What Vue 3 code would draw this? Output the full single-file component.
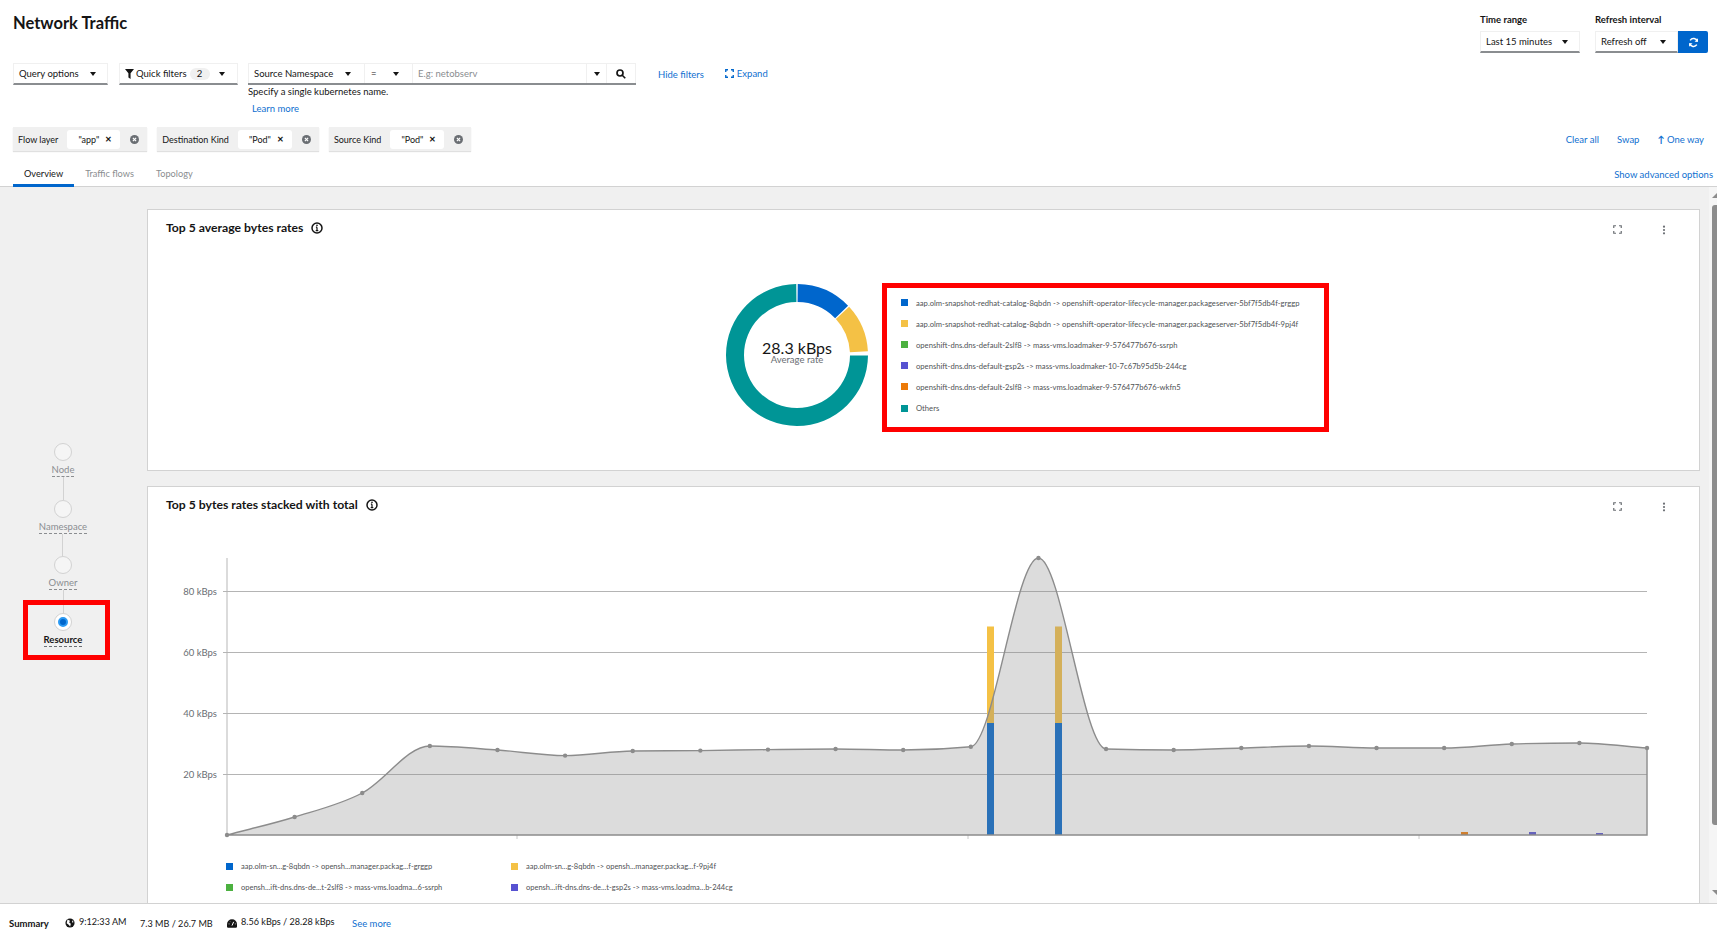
<template>
  <div class="page">
    <header class="head">
      <div class="top-row">
        <h1 class="title">Network Traffic</h1>
        <div class="time-controls">
          <div class="field range-field">
            <label>Time range</label>
            <div class="select range-select">Last 15 minutes<i class="caret"></i></div>
          </div>
          <div class="field">
            <label>Refresh interval</label>
            <div class="refresh-wrap">
              <div class="select refresh-select">Refresh off<i class="caret"></i></div>
              <button class="sync-btn">
                <svg width="11" height="11" viewBox="0 0 16 16" fill="none" stroke="#fff" stroke-width="2.2">
                  <path d="M13.5 6.5A5.7 5.7 0 0 0 3.2 4.8" />
                  <path d="M2.5 9.5a5.7 5.7 0 0 0 10.3 1.7" />
                  <path d="M14.5 1.8v5h-5z" fill="#fff" stroke="none" />
                  <path d="M1.5 14.2v-5h5z" fill="#fff" stroke="none" />
                </svg>
              </button>
            </div>
          </div>
        </div>
      </div>

      <div class="filter-row">
        <div class="select query-select">Query options<i class="caret"></i></div>
        <div class="select quick-select">
          <svg class="funnel" width="9" height="10" viewBox="0 0 10 11"><path d="M0 0h10L6.2 4.6V11L3.8 9.4V4.6z" fill="#151515" /></svg>
          <span>Quick filters</span>
          <span class="badge">2</span>
          <i class="caret"></i>
        </div>
        <div class="search-group">
          <div class="sg-item sg-source">Source Namespace<i class="caret"></i></div>
          <div class="sg-item sg-eq">=<i class="caret"></i></div>
          <div class="sg-item sg-input">E.g: netobserv</div>
          <div class="sg-item sg-more"><i class="caret"></i></div>
          <div class="sg-item sg-search">
            <svg width="10" height="10" viewBox="0 0 12 12" fill="none" stroke="#151515" stroke-width="2">
              <circle cx="4.8" cy="4.8" r="3.6" />
              <path d="M7.5 7.5l3.6 3.6" />
            </svg>
          </div>
        </div>
        <a class="link hide-link">Hide filters</a>
        <a class="link expand-link">
          <svg width="9" height="9" viewBox="0 0 12 12" fill="none" stroke="#06c" stroke-width="1.8">
            <path d="M1 4V1h3M8 1h3v3M11 8v3H8M4 11H1V8" />
          </svg>
          Expand
        </a>
      </div>

      <div class="hint">Specify a single kubernetes name.</div>
      <a class="link learn">Learn more</a>

      <div class="chips-row">
        <div class="chips">
          <div v-for="chip in chips" :key="chip.label" class="chip">
            <span class="chip-label">{{ chip.label }}</span>
            <span class="chip-value">{{ chip.value }}<b class="chip-x">✕</b></span>
            <svg class="chip-close" width="9" height="9" viewBox="0 0 10 10">
              <circle cx="5" cy="5" r="5" fill="#6a6e73" />
              <path d="M3.2 3.2l3.6 3.6M6.8 3.2l-3.6 3.6" stroke="#fff" stroke-width="1.3" />
            </svg>
          </div>
        </div>
        <div class="chip-actions">
          <a class="link">Clear all</a>
          <a class="link">Swap</a>
          <a class="link"><span class="up">↑</span> One way</a>
        </div>
      </div>

      <div class="tabs-row">
        <div class="tabs">
          <div class="tab active">Overview</div>
          <div class="tab">Traffic flows</div>
          <div class="tab">Topology</div>
        </div>
        <a class="link advanced">Show advanced options</a>
      </div>
    </header>

    <main class="content">
      <aside class="scope">
        <div v-for="(step, i) in steps" :key="step" class="step" :class="{ current: step === 'Resource' }">
          <div class="dot"><span v-if="step === 'Resource'" class="dot-inner"></span></div>
          <div class="step-label">{{ step }}</div>
          <div v-if="i < steps.length - 1" class="connector"></div>
          <div v-if="step === 'Resource'" class="marker"></div>
        </div>
      </aside>

      <section class="cards">
        <article class="card donut-card">
          <div class="card-head">
            <h2>Top 5 average bytes rates</h2>
            <svg class="info" width="12" height="12" viewBox="0 0 12 12">
              <circle cx="6" cy="6" r="5" fill="none" stroke="#151515" stroke-width="1.5" />
              <path d="M6 5.2v3.4M4.7 8.6h2.6M4.9 5.2H6" stroke="#151515" stroke-width="1.2" fill="none" />
              <circle cx="6" cy="3.4" r=".8" fill="#151515" />
            </svg>
            <div class="card-tools">
              <svg width="9" height="9" viewBox="0 0 12 12" fill="none" stroke="#6a6e73" stroke-width="1.6"><path d="M1 4V1h3M8 1h3v3M11 8v3H8M4 11H1V8" /></svg>
              <svg width="4" height="10" viewBox="0 0 4 12" fill="#6a6e73"><circle cx="2" cy="2" r="1.3" /><circle cx="2" cy="6" r="1.3" /><circle cx="2" cy="10" r="1.3" /></svg>
            </div>
          </div>
          <div class="donut-body">
            <div class="donut-wrap">
              <svg width="144" height="144" viewBox="-72 -72 144 144">
                <path v-for="seg in segments" :key="seg.color" :d="seg.d" :fill="seg.color" />
              </svg>
              <div class="donut-text">
                <div class="donut-value">28.3 kBps</div>
                <div class="donut-sub">Average rate</div>
              </div>
            </div>
            <ul class="donut-legend">
              <li v-for="item in donutLegend" :key="item.text">
                <i :style="{ background: item.color }"></i>{{ item.text }}
              </li>
            </ul>
          </div>
        </article>

        <article class="card chart-card">
          <div class="card-head">
            <h2>Top 5 bytes rates stacked with total</h2>
            <svg class="info" width="12" height="12" viewBox="0 0 12 12">
              <circle cx="6" cy="6" r="5" fill="none" stroke="#151515" stroke-width="1.5" />
              <path d="M6 5.2v3.4M4.7 8.6h2.6M4.9 5.2H6" stroke="#151515" stroke-width="1.2" fill="none" />
              <circle cx="6" cy="3.4" r=".8" fill="#151515" />
            </svg>
            <div class="card-tools">
              <svg width="9" height="9" viewBox="0 0 12 12" fill="none" stroke="#6a6e73" stroke-width="1.6"><path d="M1 4V1h3M8 1h3v3M11 8v3H8M4 11H1V8" /></svg>
              <svg width="4" height="10" viewBox="0 0 4 12" fill="#6a6e73"><circle cx="2" cy="2" r="1.3" /><circle cx="2" cy="6" r="1.3" /><circle cx="2" cy="10" r="1.3" /></svg>
            </div>
          </div>
          <svg class="plot" width="1551" height="324" viewBox="148 526 1551 324">
            <line x1="227" y1="558" x2="227" y2="835" stroke="#d2d2d2" stroke-width="1.6" />
            <g v-for="g in gridLines" :key="g.label">
              <line x1="223" :y1="g.y" x2="1647" :y2="g.y" stroke="#b4b4b4" stroke-width="1" />
              <text x="217" :y="g.y + 3.5" text-anchor="end" class="axis-label">{{ g.label }}</text>
            </g>
            <line v-for="t in ticks" :key="t" :x1="t" y1="835" :x2="t" y2="839" stroke="#c8c8c8" />
            <rect v-for="b in bars" :key="b.x + b.color" :x="b.x" :y="b.y" width="7" :height="b.h" :fill="b.color" />
            <path :d="areaPath" fill="#8c8c8c" fill-opacity=".3" stroke="#8c8c8c" stroke-width="1.4" />
            <circle v-for="p in points" :key="p[0]" :cx="p[0]" :cy="p[1]" r="2.2" fill="#8c8c8c" />
          </svg>
          <div class="chart-legend">
            <div v-for="item in chartLegend" :key="item.text" class="chart-legend-item">
              <i :style="{ background: item.color }"></i>{{ item.text }}
            </div>
          </div>
        </article>
      </section>

      <div class="scrollbar">
        <span class="arrow-up"></span>
        <span class="thumb"></span>
        <span class="arrow-down"></span>
      </div>
    </main>

    <footer class="summary">
      <strong>Summary</strong>
      <span class="sum-item sum-time">
        <svg width="10" height="10" viewBox="0 0 12 12">
          <circle cx="6" cy="6" r="5.5" fill="#151515" />
          <path d="M3 1.8l3 1.6-1 2 2 1.4-.8 3.4L4.4 8 2 6.2zM8.4 2.6l2 2.2-1.6.8z" fill="#fff" />
        </svg>
        <span class="raised">9:12:33 AM</span>
      </span>
      <span class="sum-item sum-bytes">7.3 MB / 26.7 MB</span>
      <span class="sum-item sum-rate">
        <svg width="10" height="9" viewBox="0 0 12 10">
          <path d="M6 0a6 6 0 0 0-6 6v3a1 1 0 0 0 1 1h10a1 1 0 0 0 1-1V6a6 6 0 0 0-6-6z" fill="#151515" />
          <path d="M6 7.5L8 3" stroke="#fff" stroke-width="1.2" />
          <path d="M2 5.5h1M9.5 5.5h.8M4 2.8l.5.5" stroke="#fff" />
        </svg>
        <span class="raised">8.56 kBps / 28.28 kBps</span>
      </span>
      <a class="link see-more">See more</a>
    </footer>
  </div>
</template>

<script setup>
const chips = [
  { label: 'Flow layer', value: '"app"' },
  { label: 'Destination Kind', value: '"Pod"' },
  { label: 'Source Kind', value: '"Pod"' },
];

const steps = ['Node', 'Namespace', 'Owner', 'Resource'];

const donutLegend = [
  { color: '#06c', text: 'aap.olm-snapshot-redhat-catalog-8qbdn -> openshift-operator-lifecycle-manager.packageserver-5bf7f5db4f-grggp' },
  { color: '#f4c145', text: 'aap.olm-snapshot-redhat-catalog-8qbdn -> openshift-operator-lifecycle-manager.packageserver-5bf7f5db4f-9pj4f' },
  { color: '#4cb140', text: 'openshift-dns.dns-default-2slf8 -> mass-vms.loadmaker-9-576477b676-ssrph' },
  { color: '#5752d1', text: 'openshift-dns.dns-default-gsp2s -> mass-vms.loadmaker-10-7c67b95d5b-244cg' },
  { color: '#ec7a08', text: 'openshift-dns.dns-default-2slf8 -> mass-vms.loadmaker-9-576477b676-wkfn5' },
  { color: '#009596', text: 'Others' },
];

const chartLegend = [
  { color: '#06c', text: 'aap.olm-sn...g-8qbdn -> opensh...manager.packag...f-grggp' },
  { color: '#f4c145', text: 'aap.olm-sn...g-8qbdn -> opensh...manager.packag...f-9pj4f' },
  { color: '#4cb140', text: 'opensh...ift-dns.dns-de...t-2slf8 -> mass-vms.loadma...6-ssrph' },
  { color: '#5752d1', text: 'opensh...ift-dns.dns-de...t-gsp2s -> mass-vms.loadma...b-244cg' },
];

// ring slices, angles in degrees clockwise from 12 o'clock
const arc = (from, to, outer = 71, inner = 53) => {
  const pt = (r, a) => {
    const rad = (a - 90) * Math.PI / 180;
    return `${(r * Math.cos(rad)).toFixed(2)} ${(r * Math.sin(rad)).toFixed(2)}`;
  };
  const large = to - from > 180 ? 1 : 0;
  return `M${pt(outer, from)}A${outer} ${outer} 0 ${large} 1 ${pt(outer, to)}L${pt(inner, to)}A${inner} ${inner} 0 ${large} 0 ${pt(inner, from)}Z`;
};

const segments = [
  { color: '#06c', d: arc(0.6, 46) },
  { color: '#f4c145', d: arc(47.2, 87) },
  { color: '#009596', d: arc(90.5, 359.4) },
];

const gridLines = [
  { label: '80 kBps', y: 591.5 },
  { label: '60 kBps', y: 652.5 },
  { label: '40 kBps', y: 713.5 },
  { label: '20 kBps', y: 774.5 },
];

const ticks = [517, 968, 1419];

const bars = [
  { x: 987, y: 626.5, h: 96.5, color: '#f4c145' },
  { x: 987, y: 723, h: 112, color: '#06c' },
  { x: 1055, y: 626.5, h: 96.5, color: '#f4c145' },
  { x: 1055, y: 723, h: 112, color: '#06c' },
  { x: 1461, y: 832, h: 3, color: '#ec7a08' },
  { x: 1529, y: 832, h: 3, color: '#5752d1' },
  { x: 1596, y: 833, h: 2, color: '#5752d1' },
];

const totals = [835, 817, 793, 746, 750, 755.6, 751, 750.6, 749.6, 749, 750, 746.7, 558, 749, 750, 748, 746, 748, 748, 744, 743, 748];
const points = totals.map((y, i) => [227 + i * 67.62, y]);

// same curve as d3's curveMonotoneX
const monotonePath = (pts) => {
  const n = pts.length;
  const slope = [];
  for (let i = 0; i < n - 1; i++) {
    slope.push((pts[i + 1][1] - pts[i][1]) / (pts[i + 1][0] - pts[i][0]));
  }
  const tan = pts.map((_, i) => {
    if (i === 0) return slope[0];
    if (i === n - 1) return slope[n - 2];
    if (slope[i - 1] * slope[i] <= 0) return 0;
    const s = Math.min(Math.abs(slope[i - 1]), Math.abs(slope[i]));
    return Math.sign(slope[i]) * Math.min(2 * s, (Math.abs(slope[i - 1]) + Math.abs(slope[i])) / 2);
  });
  let d = `M${pts[0][0]} ${pts[0][1]}`;
  for (let i = 0; i < n - 1; i++) {
    const dx = (pts[i + 1][0] - pts[i][0]) / 3;
    d += `C${pts[i][0] + dx} ${pts[i][1] + tan[i] * dx} ${pts[i + 1][0] - dx} ${pts[i + 1][1] - tan[i + 1] * dx} ${pts[i + 1][0]} ${pts[i + 1][1]}`;
  }
  return d;
};

const areaPath = `${monotonePath(points)}L${points[21][0]} 835L227 835Z`;
</script>

<style>
html,
body {
  margin: 0;
  background: #fff;
}
</style>

<style scoped>
.page {
  width: 1717px;
  height: 942px;
  display: flex;
  flex-direction: column;
  overflow: hidden;
  font-family: Lato, "Noto Sans", sans-serif;
  font-size: 9.5px;
  color: #151515;
  background: #fff;
}

a.link {
  color: #0f6fd0;
  text-decoration: none;
}

/* header */
.head {
  height: 187px;
  box-sizing: border-box;
  border-bottom: 1px solid #d2d2d2;
  flex: none;
}

.top-row {
  height: 63px;
  display: flex;
  justify-content: space-between;
  padding: 0 9px 0 13px;
}

.title {
  margin: 13px 0 0;
  font-size: 16.5px;
  line-height: 20px;
  font-weight: 700;
}

.time-controls {
  display: flex;
  gap: 15px;
  padding-top: 13px;
}

.field label {
  display: block;
  height: 18px;
  line-height: 13px;
  font-weight: 700;
}

.select {
  box-sizing: border-box;
  height: 22px;
  display: flex;
  align-items: center;
  padding: 0 0 0 5px;
  border: 1px solid #f0f0f0;
  border-bottom: 2px solid #8a8d90;
}

.caret {
  display: block;
  width: 0;
  height: 0;
  border-left: 3px solid transparent;
  border-right: 3px solid transparent;
  border-top: 4px solid #151515;
}

.select .caret {
  margin-left: auto;
}

.range-select {
  width: 100px;
  padding-right: 11px;
}

.refresh-wrap {
  display: flex;
}

.refresh-select {
  width: 83px;
  padding-right: 11px;
}

.sync-btn {
  width: 30px;
  height: 22px;
  border: 0;
  padding: 0;
  border-radius: 0 2px 2px 0;
  background: #06c;
  display: flex;
  align-items: center;
  justify-content: center;
}

.filter-row {
  display: flex;
  align-items: center;
  padding-left: 13px;
}

.query-select {
  width: 95px;
  padding-right: 11px;
}

.quick-select {
  width: 119px;
  margin-left: 11px;
  padding-left: 5px;
  padding-right: 12px;
}

.funnel {
  margin-right: 2px;
}

.badge {
  width: 20px;
  height: 12px;
  line-height: 12px;
  margin-left: 3px;
  text-align: center;
  border-radius: 6px;
  background: #f0f0f0;
}

.search-group {
  margin-left: 10px;
  width: 388px;
  height: 22px;
  box-sizing: border-box;
  display: flex;
  border-top: 1px solid #f0f0f0;
  border-bottom: 2px solid #8a8d90;
}

.sg-item {
  display: flex;
  align-items: center;
  box-sizing: border-box;
  border-left: 1px solid #f0f0f0;
  border-right: 1px solid #f0f0f0;
  margin-right: -1px;
}

.sg-source {
  width: 117px;
  padding: 0 13px 0 5px;
  justify-content: space-between;
}

.sg-eq {
  width: 49px;
  padding: 0 13px 0 6px;
  justify-content: space-between;
}

.sg-input {
  width: 175px;
  padding-left: 5px;
  color: #8a8d90;
}

.sg-more {
  width: 21px;
  justify-content: center;
}

.sg-search {
  width: 30px;
  margin-right: 0;
  justify-content: center;
}

.hide-link {
  margin-left: 22px;
}

.expand-link {
  margin-left: 21px;
  margin-top: -2px;
  display: flex;
  align-items: center;
  gap: 3px;
}

.hint {
  margin: 0 0 0 248px;
  height: 13px;
  line-height: 13px;
}

.learn {
  display: block;
  margin: 4px 0 0 252px;
  height: 13px;
  line-height: 13px;
}

.chips-row {
  display: flex;
  justify-content: space-between;
  align-items: center;
  margin-top: 12px;
  padding: 0 13px;
  height: 24px;
}

.chips {
  display: flex;
  gap: 10px;
}

.chip {
  height: 24px;
  display: flex;
  align-items: center;
  padding: 0 8px 0 5px;
  background: #f0f0f0;
  box-shadow: 0 1px 1px rgba(0, 0, 0, .12);
  font-size: 9px;
}

.chip-value {
  height: 19px;
  display: flex;
  align-items: center;
  margin-left: 9px;
  padding: 0 8px 0 11px;
  background: #fff;
  border-radius: 3px;
}

.chip-x {
  margin-left: 6px;
  font-size: 8px;
  color: #151515;
}

.chip-close {
  margin-left: 10px;
}

.chip-actions {
  display: flex;
  gap: 18px;
}

.up {
  font-weight: 700;
}

.tabs-row {
  display: flex;
  justify-content: space-between;
  margin-top: 11px;
  padding: 0 4px 0 13px;
}

.tabs {
  display: flex;
  height: 25px;
}

.tab {
  padding: 0 11px;
  line-height: 24px;
  color: #8a8d90;
  font-size: 9.2px;
}

.tab.active {
  color: #151515;
  box-shadow: inset 0 -3px 0 #06c;
}

.advanced {
  line-height: 26px;
}

/* page body */
.content {
  flex: 1;
  min-height: 0;
  display: flex;
  background: #f0f0f0;
}

.scope {
  width: 147px;
  flex: none;
  box-sizing: border-box;
  padding: 256px 21px 0 0;
  display: flex;
  flex-direction: column;
  align-items: center;
}

.step {
  position: relative;
  display: flex;
  flex-direction: column;
  align-items: center;
}

.dot {
  box-sizing: border-box;
  width: 18px;
  height: 18px;
  border-radius: 50%;
  border: 1px solid #d2d2d2;
  background: #f5f5f5;
  display: flex;
  align-items: center;
  justify-content: center;
}

.current .dot {
  background: #fff;
}

.dot-inner {
  width: 6px;
  height: 6px;
  border-radius: 50%;
  background: #06c;
  border: 2px solid #2b9af3;
}

.step-label {
  margin-top: 2px;
  height: 14px;
  line-height: 14px;
  color: #8a8d90;
  border-bottom: 1px dashed #8a8d90;
  box-sizing: border-box;
}

.current .step-label {
  color: #151515;
  font-weight: 700;
  border-bottom-color: #6a6e73;
}

.connector {
  width: 1px;
  height: 22.6px;
  background: #d2d2d2;
}

.marker {
  position: absolute;
  left: 50%;
  margin-left: -40px;
  width: 87px;
  box-sizing: border-box;
  top: -13px;
  bottom: -13px;
  border: 5px solid #f00;
}

.cards {
  width: 1553px;
  flex: none;
  box-sizing: border-box;
  padding: 22px 0 0 0;
  display: flex;
  flex-direction: column;
  gap: 15px;
  overflow: hidden;
}

.card {
  background: #fff;
  border: 1px solid #d2d2d2;
  box-sizing: border-box;
}

.card-head {
  height: 39px;
  display: flex;
  align-items: center;
  padding: 0 33px 0 18px;
  gap: 8px;
}

.card-head h2 {
  margin: 0 0 4px;
  font-size: 12.2px;
  font-weight: 700;
}

.info {
  flex: none;
  margin-bottom: 4px;
}

.card-tools {
  margin-left: auto;
  display: flex;
  align-items: center;
  gap: 40.5px;
}

.donut-card {
  height: 262px;
  flex: none;
}

.donut-body {
  display: flex;
  gap: 13px;
  padding: 34px 0 0 577px;
}

.donut-wrap {
  position: relative;
  width: 144px;
  height: 144px;
}

.donut-text {
  position: absolute;
  inset: 0;
  padding-bottom: 4px;
  box-sizing: border-box;
  display: flex;
  flex-direction: column;
  align-items: center;
  justify-content: center;
}

.donut-value {
  font-size: 16px;
  line-height: 14px;
}

.donut-sub {
  font-size: 9.5px;
  line-height: 10px;
  color: #6a6e73;
}

.donut-legend {
  list-style: none;
  margin: 0;
  width: 447px;
  height: 149px;
  box-sizing: border-box;
  border: 5px solid #f00;
  padding: 4px 0 0 14px;
  display: grid;
  grid-auto-rows: 21.1px;
  font-size: 7.65px;
  color: #4f5255;
}

.donut-legend li {
  display: flex;
  align-items: center;
  white-space: nowrap;
}

.donut-legend i,
.chart-legend i {
  display: block;
  width: 7px;
  height: 7px;
  flex: none;
  margin-right: 8px;
}

.chart-card {
  flex: 1;
  min-height: 0;
  border-bottom: 0;
}

.plot {
  display: block;
}

.axis-label {
  font-size: 9.5px;
  fill: #6a6e73;
}

.chart-legend {
  padding: 6px 0 0 78px;
  display: grid;
  grid-template-columns: 285px 285px;
  grid-auto-rows: 21px;
  font-size: 7.5px;
  color: #4f5255;
}

.chart-legend-item {
  display: flex;
  align-items: center;
  white-space: nowrap;
}

.scrollbar {
  width: 8px;
  margin-left: 9px;
  flex: none;
  background: #f5f5f5;
  display: flex;
  flex-direction: column;
  align-items: flex-end;
  padding-top: 6px;
  box-sizing: border-box;
}

.arrow-up,
.arrow-down {
  width: 0;
  height: 0;
  border-left: 5px solid transparent;
}

.arrow-up {
  border-bottom: 5px solid #8c8c8c;
}

.arrow-down {
  border-top: 5px solid #8c8c8c;
  margin-top: 65px;
}

.thumb {
  width: 5px;
  height: 620px;
  margin-top: 7px;
  background: #8c8c8c;
  border-radius: 3px 0 0 3px;
}

/* bottom bar */
.summary {
  height: 39px;
  flex: none;
  box-sizing: border-box;
  border-top: 1px solid #d2d2d2;
  display: flex;
  align-items: center;
  padding: 0 0 0 9px;
  white-space: nowrap;
}

.summary strong {
  width: 56px;
  font-weight: 700;
}

.sum-item {
  display: flex;
  align-items: center;
  gap: 4px;
  font-size: 9.1px;
}

.raised {
  margin-top: -3px;
}

.sum-time {
  width: 75px;
}

.sum-bytes {
  width: 87px;
}

.sum-rate {
  width: 125px;
}
</style>
